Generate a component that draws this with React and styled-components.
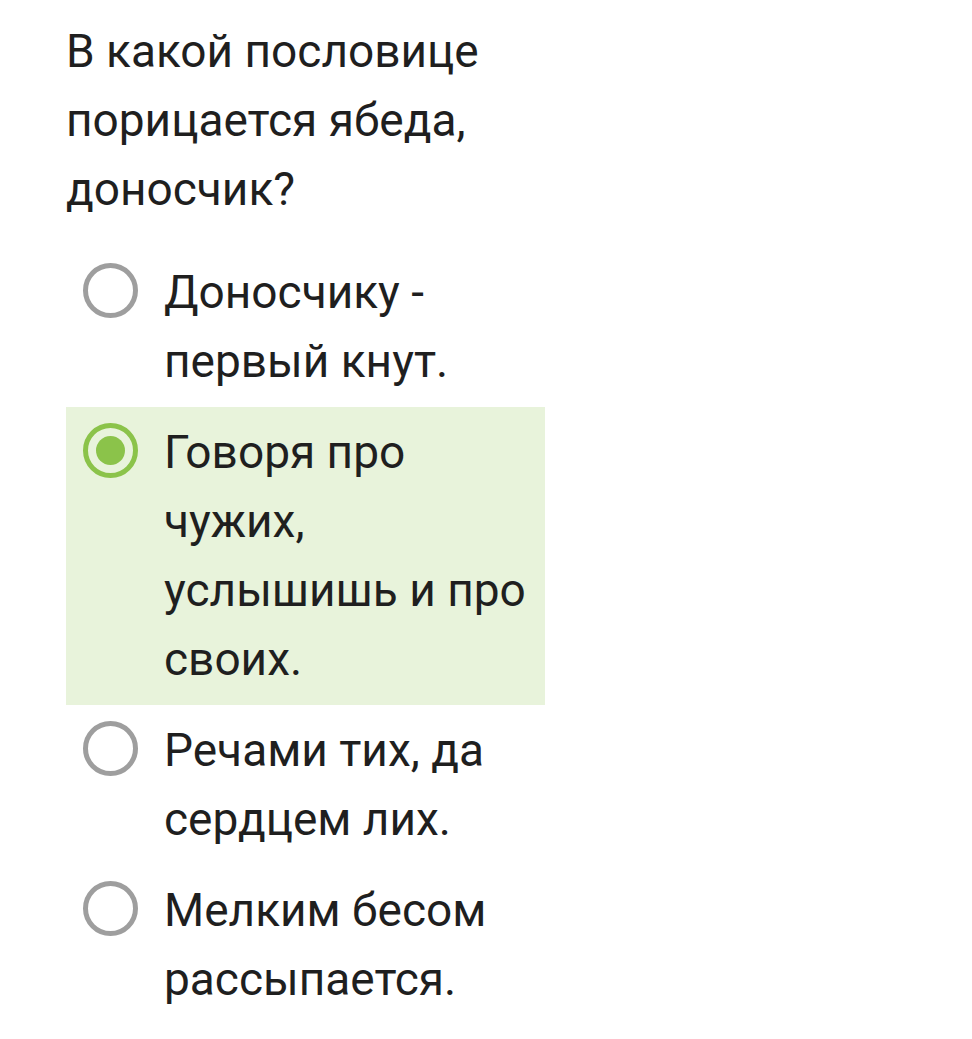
import React from "react";
import styled, { createGlobalStyle } from "styled-components";

const Global = createGlobalStyle`
  html, body { margin: 0; padding: 0; background: #ffffff; }
  body { font-family: Roboto, "Noto Sans", "Liberation Sans", sans-serif; }
`;

const Page = styled.div`
  width: 479px;
  padding: 17px 0 30px 66px;
  display: flex;
  flex-direction: column;
  gap: 23px;
`;

const Question = styled.div`
  font-size: 46px;
  line-height: 69px;
  color: #1f1f1f;
`;

const Options = styled.div`
  display: flex;
  flex-direction: column;
`;

const Option = styled.label`
  display: flex;
  align-items: flex-start;
  gap: 26px;
  padding: 11px 0 11px 17px;
  background: ${(p) => (p.$selected ? "#e8f3db" : "transparent")};
`;

const Radio = styled.span`
  flex: none;
  box-sizing: border-box;
  width: 55px;
  height: 55px;
  margin-top: 5px;
  border-radius: 50%;
  border: 5px solid ${(p) => (p.$selected ? "#8bc34a" : "#9e9e9e")};
  display: flex;
  align-items: center;
  justify-content: center;
`;

const Dot = styled.span`
  width: 29px;
  height: 29px;
  border-radius: 50%;
  background: #8bc34a;
`;

const OptionText = styled.span`
  flex: 1;
  font-size: 46px;
  line-height: 69px;
  color: #1f1f1f;
  padding-right: 8px;
`;

const options = [
  "Доносчику - первый кнут.",
  "Говоря про чужих, услышишь и про своих.",
  "Речами тих, да сердцем лих.",
  "Мелким бесом рассыпается.",
];

export default function App() {
  const selected = 1;
  return (
    <>
      <Global />
      <Page>
        <Question>В какой пословице порицается ябеда, доносчик?</Question>
        <Options>
          {options.map((o, i) => (
            <Option key={i} $selected={i === selected}>
              <Radio $selected={i === selected}>{i === selected && <Dot />}</Radio>
              <OptionText>{o}</OptionText>
            </Option>
          ))}
        </Options>
      </Page>
    </>
  );
}
